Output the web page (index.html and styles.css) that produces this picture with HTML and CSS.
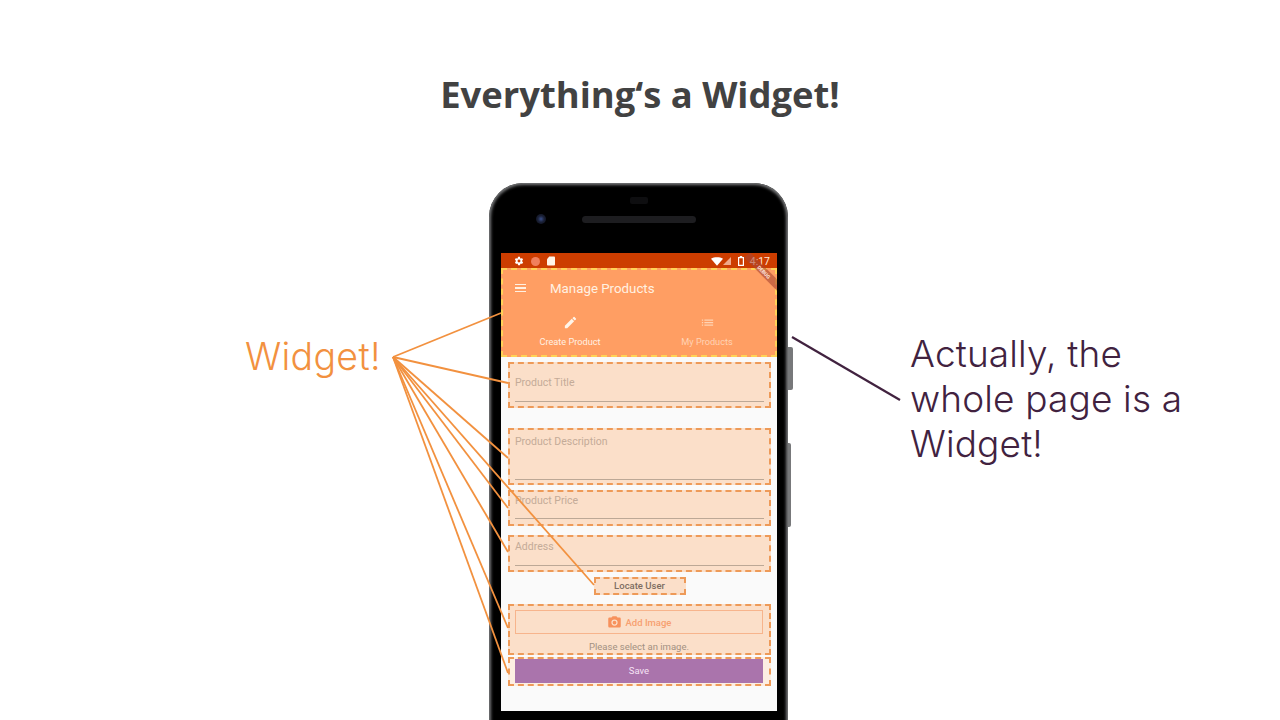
FILE: index.html
```html
<!DOCTYPE html>
<html lang="en">
  <head>
    <meta charset="UTF-8" />
    <title>Everything's a Widget!</title>
    <link rel="stylesheet" href="styles.css">
  </head>
  <body>
    <div class="slide">
      <h1>Everything‘s a Widget!</h1>

      <!-- phone -->
      <div class="phone">
        <span class="earpiece"></span>
        <div class="camera-row">
          <span class="camera"></span>
          <span class="speaker"></span>
        </div>
        <div class="screen">
          <div class="status-bar">
            <div class="status-left">
              <svg width="10" height="10" viewBox="0 0 24 24"><path fill="#fff" d="M19.4 13c.1-.3.1-.7.1-1s0-.7-.1-1l2.1-1.6c.2-.2.2-.4.1-.6l-2-3.5c-.1-.2-.4-.3-.6-.2l-2.5 1c-.5-.4-1.100-.7-1.700-1l-.4-2.600c0-.2-.2-.4-.5-.4h-4c-.2 0-.5.2-.5.400l-.4 2.600c-.6.3-1.200.6-1.700 1l-2.500-1c-.2-.1-.5 0-.6.2l-2 3.500c-.1.2-.1.5.1.6L4.600 11c-.1.3-.1.700-.1 1s0 .7.100 1l-2.100 1.600c-.2.200-.2.400-.1.600l2 3.500c.1.200.4.300.6.200l2.500-1c.5.400 1.100.700 1.700 1l.4 2.600c0 .2.3.4.5.4h4c.3 0 .5-.2.5-.4l.4-2.600c.6-.3 1.200-.6 1.700-1l2.500 1c.2.100.5 0 .6-.2l2-3.500c.1-.2.1-.4-.1-.6zM12 15.500a3.500 3.500 0 1 1 0-7 3.500 3.500 0 0 1 0 7z"/></svg>
              <span class="status-dot"></span>
              <svg width="8" height="10" viewBox="0 0 9 10"><path fill="#fff4e8" d="M2.500 0H8a1 1 0 0 1 1 1v8a1 1 0 0 1-1 1H1a1 1 0 0 1-1-1V3z"/></svg>
            </div>
            <div class="status-right">
              <svg width="12" height="9" viewBox="0 0 13 9"><path fill="#fff" d="M0 1.500C3.800-.5 9.200-.5 13 1.500L6.500 9z"/></svg>
              <svg class="signal" width="8" height="8" viewBox="0 0 9 9"><path fill="#f0a98a" d="M9 0v9H0z"/></svg>
              <svg class="battery" width="6" height="10" viewBox="0 0 6 10"><path fill="#fff" d="M1.800 0h2.400v1H6v9H0V1h1.800zM1.200 2.200v6.600h3.600V2.200z"/></svg>
              <span class="clock">4:17</span>
            </div>
          </div>

          <div class="app-bar">
            <div class="toolbar">
              <span class="menu-icon"><i></i><i></i><i></i></span>
              <span class="app-title">Manage Products</span>
            </div>
            <div class="tabs">
              <div class="tab tab-active">
                <svg width="15" height="15" viewBox="0 0 24 24"><path fill="#fff5ea" d="M3 17.250V21h3.750L17.800 9.940l-3.750-3.750zM20.700 7.040a1 1 0 0 0 0-1.410l-2.340-2.340a1 1 0 0 0-1.410 0l-1.830 1.830 3.750 3.750z"/></svg>
                <span>Create Product</span>
              </div>
              <div class="tab">
                <svg width="15" height="15" viewBox="0 0 24 24"><path fill="#ffd3b4" d="M3 13h2v-2H3zm0 4h2v-2H3zm0-8h2V7H3zm4 4h14v-2H7zm0 4h14v-2H7zM7 7v2h14V7z"/></svg>
                <span>My Products</span>
              </div>
            </div>
          </div>
          <span class="debug-banner">DEBUG</span>

          <div class="form">
            <div class="field field-title"><span>Product Title</span></div>
            <div class="field field-desc"><span>Product Description</span></div>
            <div class="field field-price"><span>Product Price</span></div>
            <div class="field field-address"><span>Address</span></div>
            <div class="locate">Locate User</div>
            <div class="image-box">
              <div class="add-image">
                <svg width="15" height="15" viewBox="0 0 24 24"><path fill="#f7915c" d="M9 2 7.170 4H4a2 2 0 0 0-2 2v12a2 2 0 0 0 2 2h16a2 2 0 0 0 2-2V6a2 2 0 0 0-2-2h-3.170L15 2zm3 15a5 5 0 1 1 0-10 5 5 0 0 1 0 10zm0-2a3 3 0 1 0 0-6 3 3 0 0 0 0 6z"/></svg>
                <span>Add Image</span>
              </div>
              <p>Please select an image.</p>
            </div>
            <div class="save-box">
              <div class="save">Save</div>
            </div>
          </div>
        </div>
        <span class="side-key key-power"></span>
        <span class="side-key key-volume"></span>
      </div>

      <!-- callouts -->
      <svg class="lines" width="1280" height="720" viewBox="0 0 1280 720">
        <g stroke="#f2913f" stroke-width="1.800" fill="none">
          <path d="M393 357 501 313" />
          <path d="M393 357 508 383" />
          <path d="M393 357 508 458" />
          <path d="M393 357 508 508" />
          <path d="M393 357 508 552" />
          <path d="M393 357 594 585" />
          <path d="M393 357 508 628" />
          <path d="M393 357 508 673" />
        </g>
        <path d="M792 337 900 400" stroke="#41223f" stroke-width="2.200" fill="none" />
      </svg>
      <div class="label-widget">Widget!</div>
      <div class="label-page">Actually, the<br />whole page is a<br />Widget!</div>
    </div>
  </body>
</html>
```

FILE: styles.css
```css
/* slide */
body {
  margin: 0;
  background-color: #fff;
  font-family: "Roboto", "Liberation Sans", sans-serif;
}

.slide {
  position: relative;
  width: 1280px;
  height: 720px;
  overflow: hidden;
}

h1 {
  margin: 0;
  padding-top: 70px;
  height: 183px;
  box-sizing: border-box;
  text-align: center;
  font-family: "Open Sans", sans-serif;
  font-size: 36.400px;
  line-height: 48px;
  font-weight: 700;
  color: #424242;
}

/* phone */
.phone {
  position: relative;
  box-sizing: border-box;
  width: 299px;
  height: 560px;
  margin-left: 489px;
  padding: 0 11px 0 12px;
  background-color: #000;
  border-radius: 34px 34px 0 0;
  box-shadow: inset 0 0 3px 2px #77787a;
}

.earpiece {
  position: absolute;
  top: 14px;
  left: 141px;
  width: 18px;
  height: 7px;
  border-radius: 2px;
  background-color: #0e0e10;
}

.camera-row {
  display: flex;
  align-items: center;
  height: 70px;
  padding-left: 35px;
}

.camera {
  width: 10px;
  height: 10px;
  margin-top: 2px;
  border-radius: 50%;
  background: radial-gradient(circle, #3a4f8a 0, #1a2036 45%, #0c0e16 100%);
}

.speaker {
  width: 114px;
  height: 7px;
  margin-left: 36px;
  margin-top: 2px;
  border-radius: 4px;
  background-color: #1d1d20;
}

.screen {
  position: relative;
  width: 276px;
  height: 458px;
  background-color: #fafafa;
  overflow: hidden;
}

/* status bar */
.status-bar {
  display: flex;
  justify-content: space-between;
  align-items: center;
  height: 15px;
  padding: 1px 7px 0 13px;
  box-sizing: border-box;
  background-color: #cc3d00;
}

.status-left,
.status-right {
  display: flex;
  align-items: center;
}

.status-left {
  gap: 7px;
}

.status-dot {
  width: 9px;
  height: 9px;
  border-radius: 50%;
  background-color: #f0805c;
}

.signal {
  margin-right: 7px;
}

.battery {
  margin-right: 6px;
}

.clock {
  font-size: 10.500px;
  color: #ffe6d8;
}

/* app bar */
.app-bar {
  height: 89px;
  box-sizing: border-box;
  background-color: #ff9e63;
  border: 2px dashed #ffd257;
}

.toolbar {
  display: flex;
  align-items: center;
  height: 36px;
  padding-left: 12px;
}

.menu-icon {
  display: flex;
  flex-direction: column;
  gap: 2px;
  width: 11px;
}

.menu-icon i {
  height: 1.500px;
  background-color: #fff1e2;
}

.app-title {
  margin-left: 24px;
  font-size: 13.300px;
  font-weight: 400;
  color: #fff1e2;
}

.tabs {
  display: grid;
  grid-template-columns: 134px 140px;
  padding-top: 9px;
}

.tab {
  display: flex;
  flex-direction: column;
  align-items: center;
  gap: 6px;
  font-size: 9.200px;
  font-weight: 400;
  color: #ffd3b4;
}

.tab-active {
  color: #fff1e2;
}

.debug-banner {
  position: absolute;
  top: 15px;
  left: 239px;
  width: 48px;
  height: 8px;
  line-height: 8px;
  text-align: center;
  font-size: 5px;
  font-weight: 700;
  color: #ffe8e0;
  background-color: rgba(170, 70, 50, 0.6);
  transform: rotate(45deg);
}

/* form */
.form {
  display: flex;
  flex-direction: column;
  padding: 5px 6px 0 7px;
}

.field {
  display: flex;
  box-sizing: border-box;
  padding: 0 5px 0 5px;
  background-color: #fbdfc9;
  border: 2px dashed #ee9a58;
  font-size: 10.500px;
  color: #c4ab98;
}

.field span {
  flex: 1;
  border-bottom: 1px solid #bca896;
}

.field-title {
  height: 46px;
  padding-bottom: 4px;
  padding-top: 12px;
}

.field-desc {
  height: 57px;
  margin-top: 20px;
  padding-top: 5px;
  padding-bottom: 3px;
}

.field-price {
  height: 36px;
  margin-top: 5px;
  padding-top: 2px;
  padding-bottom: 5px;
}

.field-address {
  height: 37px;
  margin-top: 9px;
  padding-top: 3px;
  padding-bottom: 4px;
}

.locate {
  align-self: center;
  box-sizing: border-box;
  width: 92px;
  height: 18px;
  margin-top: 5px;
  line-height: 13px;
  text-align: center;
  font-size: 9.500px;
  font-weight: 500;
  color: #7d6d62;
  background-color: #fbdfc9;
  border: 2px dashed #ee9a58;
}

.image-box {
  box-sizing: border-box;
  height: 51px;
  margin-top: 9px;
  padding: 4px 6px 0 5px;
  background-color: #fbdfc9;
  border: 2px dashed #ee9a58;
}

.add-image {
  display: flex;
  justify-content: center;
  align-items: center;
  gap: 4px;
  height: 24px;
  box-sizing: border-box;
  font-size: 9.500px;
  font-weight: 500;
  color: #f7a070;
  border: 1px solid #f7b48c;
}

.image-box p {
  margin: 7px 0 0;
  text-align: center;
  font-size: 9.500px;
  line-height: 12px;
  color: #a39182;
}

.save-box {
  box-sizing: border-box;
  height: 29px;
  margin-top: 2px;
  padding: 0 6px 0 5px;
  background-color: #fdeee2;
  border: 2px dashed #ee9a58;
}

.save {
  height: 24px;
  line-height: 24px;
  text-align: center;
  font-size: 9.500px;
  font-weight: 400;
  color: #f6e2f4;
  background-color: #aa74ac;
}

/* side keys of the phone */
.side-key {
  position: absolute;
  border-radius: 0 2px 2px 0;
  background-color: #77787a;
}

.key-power {
  top: 164px;
  right: -5px;
  width: 5px;
  height: 43px;
}

.key-volume {
  top: 260px;
  right: -3px;
  width: 3px;
  height: 84px;
}

/* callouts */
.lines {
  position: absolute;
  top: 0;
  left: 0;
}

.label-widget {
  position: absolute;
  top: 335px;
  left: 245px;
  font-family: "Inter", sans-serif;
  font-size: 37.500px;
  line-height: 44px;
  font-weight: 300;
  letter-spacing: 0.300px;
  color: #f2913f;
}

.label-page {
  position: absolute;
  top: 331px;
  left: 910px;
  font-family: "Inter", sans-serif;
  font-size: 37px;
  line-height: 45px;
  font-weight: 300;
  letter-spacing: 0.150px;
  color: #41223f;
}
```
